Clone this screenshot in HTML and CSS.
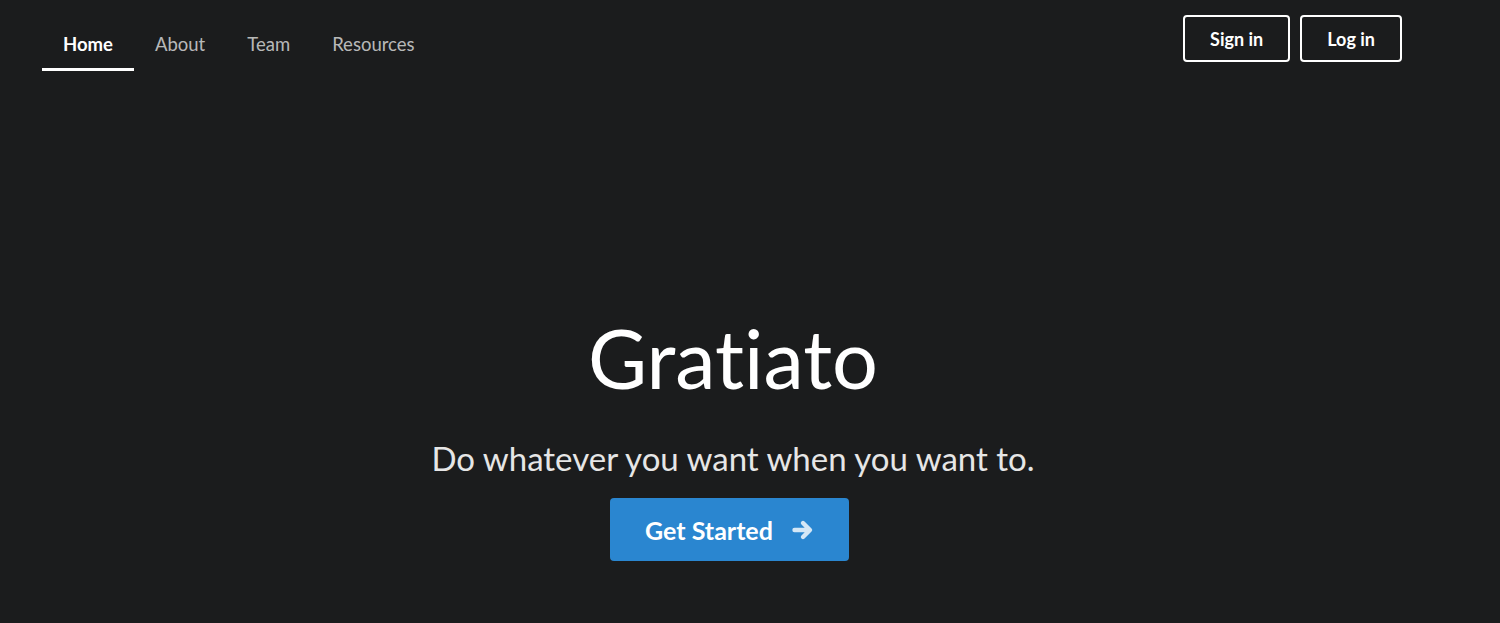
FILE: index.html
```html
<!DOCTYPE html>
<html lang="en">
<head>
<meta charset="utf-8">
<title>Gratiato</title>
<link rel="stylesheet" href="styles.css">
</head>
<body>
<div class="page">
  <header class="topbar">
    <nav class="menu">
      <a class="item active" href="#">Home</a>
      <a class="item" href="#">About</a>
      <a class="item" href="#">Team</a>
      <a class="item" href="#">Resources</a>
    </nav>
    <div class="actions">
      <a class="outline-btn" href="#">Sign in</a>
      <a class="outline-btn" href="#">Log in</a>
    </div>
  </header>
  <main class="hero">
    <h1 class="title">Gratiato</h1>
    <h2 class="subtitle">Do whatever you want when you want to.</h2>
    <a class="primary-btn" href="#">Get Started
      <svg class="arrow" viewBox="0 0 22 22" width="22" height="22" aria-hidden="true">
        <path d="M2.5 11 H17.5 M11 4 L18 11 L11 18" fill="none" stroke="currentColor" stroke-width="4.4" stroke-linecap="round" stroke-linejoin="round"/>
      </svg>
    </a>
  </main>
</div>
</body>
</html>
```
FILE: styles.css
```css
html, body {
  margin: 0;
  padding: 0;
  background: #1b1c1d;
}
body {
  font-family: Lato, "Liberation Sans", sans-serif;
  color: #fff;
  font-variant-ligatures: none;
}
.page {
  height: 623px;
  overflow: hidden;
  display: flex;
  flex-direction: column;
}
.topbar {
  display: flex;
  justify-content: space-between;
  align-items: flex-start;
  padding: 0 98px 0 42px;
}
.menu {
  display: flex;
  padding-top: 32px;
}
.item {
  display: block;
  font-size: 18.5px;
  line-height: 24px;
  padding: 0 21px 12px;
  border-bottom: 3px solid transparent;
  color: rgba(255, 255, 255, 0.7);
  text-decoration: none;
}
.item.active {
  color: #fff;
  font-weight: 700;
  border-bottom-color: #fff;
}
.actions {
  display: flex;
  gap: 10px;
  padding-top: 15px;
}
.outline-btn {
  display: flex;
  align-items: center;
  height: 47px;
  box-sizing: border-box;
  padding: 0 25px;
  border: 2px solid #fff;
  border-radius: 4px;
  color: #fff;
  font-weight: 700;
  font-size: 18px;
  text-decoration: none;
}
.hero {
  display: flex;
  flex-direction: column;
  align-items: center;
  padding-right: 34px;
  padding-top: 247px;
}
.title {
  margin: 0;
  font-size: 81px;
  line-height: 80px;
  font-weight: 400;
  color: #fff;
}
.subtitle {
  margin: 42px 0 0;
  font-size: 33px;
  line-height: 36px;
  font-weight: 400;
  color: #e6e6e6;
}
.primary-btn {
  margin: 22px 7px 0 0;
  display: flex;
  align-items: center;
  justify-content: center;
  gap: 19px;
  width: 239px;
  height: 63px;
  box-sizing: border-box;
  background: #2a86d0;
  border-radius: 4px;
  color: #fff;
  font-weight: 700;
  font-size: 25px;
  text-decoration: none;
}
.arrow {
  color: rgba(255, 255, 255, 0.8);
}
```
